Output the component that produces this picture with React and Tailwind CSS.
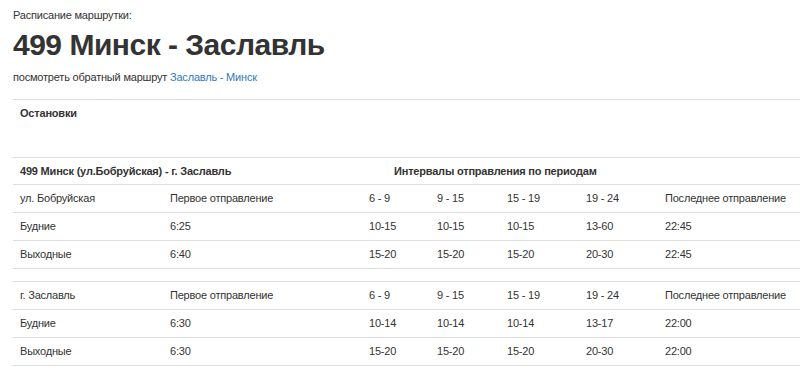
import React from "react";

const cols = ["w-[150px]", "w-[199px]", "w-[68px]", "w-[70px]", "w-[79px]", "w-[79px]", "w-auto"];

const directions = [
  {
    stop: "ул. Бобруйская",
    rows: [
      ["Будние", "6:25", "10-15", "10-15", "10-15", "13-60", "22:45"],
      ["Выходные", "6:40", "15-20", "15-20", "15-20", "20-30", "22:45"],
    ],
  },
  {
    stop: "г. Заславль",
    rows: [
      ["Будние", "6:30", "10-14", "10-14", "10-14", "13-17", "22:00"],
      ["Выходные", "6:30", "15-20", "15-20", "15-20", "20-30", "22:00"],
    ],
  },
];

const td = "px-[7px] py-[5px] leading-[17px] text-left align-top font-normal";

function ColGroup() {
  return (
    <colgroup>
      {cols.map((c, i) => (
        <col key={i} className={c} />
      ))}
    </colgroup>
  );
}

function Rows({ stop, rows }) {
  const head = [stop, "Первое отправление", "6 - 9", "9 - 15", "15 - 19", "19 - 24", "Последнее отправление"];
  return (
    <>
      <tr className="border-t border-[#dddddd]">
        {head.map((h, i) => (
          <td key={i} className={td + " whitespace-nowrap"}>{h}</td>
        ))}
      </tr>
      {rows.map((r, i) => (
        <tr key={i} className="border-t border-[#dddddd]">
          {r.map((v, j) => (
            <td key={j} className={td}>{v}</td>
          ))}
        </tr>
      ))}
    </>
  );
}

export default function App() {
  return (
    <div className="w-[800px] h-[381px] overflow-hidden bg-white pl-[13px] text-[11px] tracking-[-0.2px] text-[#333333] font-['Liberation_Sans',Arial,sans-serif]">
      <div className="pt-[7px] leading-[17px]">Расписание маршрутки:</div>
      <h1 className="mt-[4px] text-[30px] tracking-[-0.5px] font-bold leading-[33px] text-[#333333]">499 Минск - Заславль</h1>
      <div className="mt-[8px] leading-[17px]">
        посмотреть обратный маршрут <a href="#" className="text-[#337ab7]">Заславль - Минск</a>
      </div>

      <table className="mt-[13px] w-[787px] table-fixed border-collapse border-b border-[#dddddd]">
        <ColGroup />
        <tbody>
          <tr className="border-t border-[#dddddd]">
            <th colSpan={7} className="h-[58px] px-[7px] py-[5px] leading-[17px] text-left align-top font-bold">
              Остановки
            </th>
          </tr>
          <tr className="border-t border-[#dddddd]">
            <th colSpan={2} className="px-[7px] pt-[5px] pb-[4px] leading-[17px] text-left font-bold whitespace-nowrap">
              499 Минск (ул.Бобруйская) - г. Заславль
            </th>
            <th colSpan={5} className="pl-[32px] pr-[7px] pt-[5px] pb-[4px] leading-[17px] text-left font-bold">
              Интервалы отправления по периодам
            </th>
          </tr>
          <Rows {...directions[0]} />
        </tbody>
      </table>

      <table className="mt-[12px] w-[787px] table-fixed border-collapse border-b border-[#dddddd]">
        <ColGroup />
        <tbody>
          <Rows {...directions[1]} />
        </tbody>
      </table>
    </div>
  );
}
